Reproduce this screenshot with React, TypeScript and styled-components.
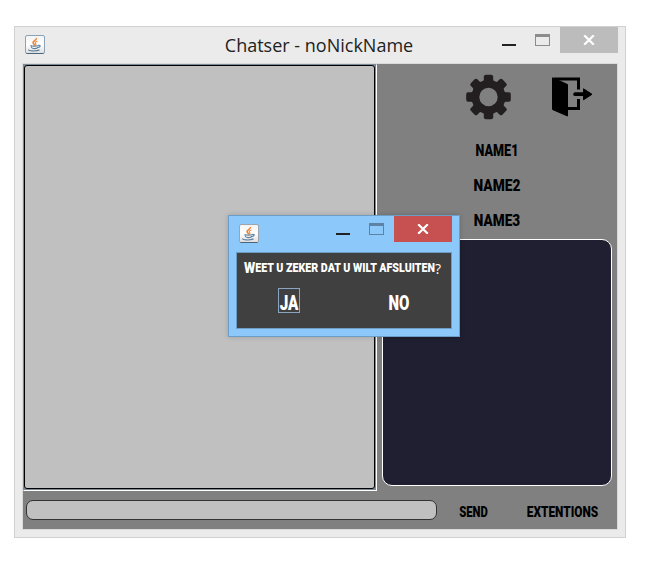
import React from "react";
import styled, { createGlobalStyle, css } from "styled-components";

const GlobalStyle = createGlobalStyle`
  * { box-sizing: border-box; }
  body { margin: 0; background: #fff; }
`;

const Desktop = styled.main`
  position: relative;
  width: 652px;
  height: 564px;
  padding: 26px 0 0 14px;
  overflow: hidden;
`;

const AppWindow = styled.section`
  display: flex;
  flex-direction: column;
  width: 612px;
  height: 512px;
  padding: 0 7px 7px;
  background: #ebebeb;
  border: 1px solid #d0d0d0;
`;

const TitleBar = styled.header`
  display: flex;
  align-items: flex-start;
  height: 36px;
  flex: none;
`;

const TitleIcon = styled.div<{ $top: number; $left: number }>`
  display: flex;
  margin: ${(p) => p.$top}px 0 0 ${(p) => p.$left}px;
`;

const Title = styled.h1`
  flex: 1;
  margin: 3px 0 0 91px;
  text-align: center;
  font: 400 18px/30px "Open Sans", sans-serif;
  color: #222;
  white-space: nowrap;
`;

const WindowControls = styled.div`
  display: flex;
  align-items: flex-start;
  margin-left: auto;
`;

const MinimizeButton = styled.button`
  width: 14px;
  height: 2px;
  margin: 17px 19px 0 0;
  padding: 0;
  border: 0;
  background: #222;
`;

const MaximizeButton = styled.button<{ $color: string }>`
  width: 15px;
  height: 12px;
  margin: 7px 10px 0 0;
  padding: 0;
  background: transparent;
  border: 1px solid ${(p) => p.$color};
  border-top-width: 3px;
`;

const CloseButton = styled.button<{ $color: string }>`
  display: flex;
  justify-content: center;
  width: 58px;
  height: 26px;
  padding: 8px 1px 0 0;
  border: 0;
  background: ${(p) => p.$color};
`;

const Content = styled.div`
  display: grid;
  grid-template: 427px 38px / 354px 240px;
  width: 596px;
  height: 467px;
  border: 1px solid #dadada;
  background: #808080;
`;

const ChatLog = styled.div`
  width: 354px;
  height: 427px;
  border: 1px solid #fff;
  border-left-color: #7b8a99;
  border-top-color: #7b8a99;
  background: #7a8a99;
  padding: 0 1px 1px 0;
`;

const ChatSurface = styled.div`
  width: 351px;
  height: 424px;
  border: 1px solid #000;
  border-radius: 3px;
  background: #c0c0c0;
`;

const Sidebar = styled.aside`
  display: flex;
  flex-direction: column;
  padding-left: 5px;
`;

const ToolRow = styled.div`
  display: flex;
  gap: 40px;
  height: 69px;
  padding: 10px 0 0 84px;
`;

const NameList = styled.div`
  display: flex;
  flex-direction: column;
  height: 106px;
  padding-left: 66px;
`;

const grunge = css`
  font-family: Roboto, "Liberation Sans", sans-serif;
  font-weight: 900;
  white-space: nowrap;
`;

const Caption = styled.span<{
  $width: number;
  $size: number;
  $line: number;
  $scale: number;
  $color?: string;
}>`
  ${grunge}
  display: flex;
  justify-content: center;
  width: ${(p) => p.$width}px;
  font-size: ${(p) => p.$size}px;
  line-height: ${(p) => p.$line}px;
  color: ${(p) => p.$color ?? "#000"};
  transform: scaleX(${(p) => p.$scale});
`;

const Small = styled.span<{ $size: number }>`
  font-size: ${(p) => p.$size}px;
`;

const QuestionMark = styled.span`
  width: 8px;
  font: 400 14px/21px "Open Sans", sans-serif;
  color: #fff;
`;

const InfoPanel = styled.div`
  width: 230px;
  height: 247px;
  border: 1px solid #fff;
  border-radius: 10px;
  background: #1f1f31;
`;

const Footer = styled.footer`
  grid-column: 1 / 3;
  display: flex;
  align-items: flex-start;
  padding: 9px 0 0 3px;
`;

const MessageInput = styled.div`
  width: 411px;
  height: 20px;
  border: 1px solid #333;
  border-radius: 7px;
  background: #c0c0c0;
`;

const FooterActions = styled.div`
  display: flex;
  gap: 39px;
  padding: 1px 0 0 22px;
`;

const Dialog = styled.section`
  position: absolute;
  left: 228px;
  top: 215px;
  width: 232px;
  height: 122px;
  padding: 0 7px 7px;
  border: 1px solid #6d9cc4;
  background: #8dc8fb;
  box-shadow: 0 0 5px rgba(0, 0, 0, 0.18);
`;

const DialogBar = styled.header`
  display: flex;
  align-items: flex-start;
  height: 36px;
`;

const DialogBody = styled.div`
  width: 216px;
  height: 77px;
  padding-top: 5px;
  border: 1px solid #6d9cc4;
  background: #404040;
`;

const Question = styled.p`
  display: flex;
  margin: 0;
  height: 20px;
  padding-left: 7px;
`;

const Choices = styled.div`
  display: flex;
  padding: 10px 0 0 41px;
  gap: 88px;
`;

const Choice = styled.div<{ $focused?: boolean }>`
  display: flex;
  justify-content: center;
  width: 22px;
  height: 25px;
  padding-top: 4px;
  border: 1px solid ${(p) => (p.$focused ? "#8aa5c2" : "transparent")};
`;

const JavaIcon = ({ edge }: { edge: string }) => (
  <svg width="20" height="19" viewBox="0 0 20 19">
    <defs>
      <linearGradient id="javaTile" x1="0" y1="0" x2="0" y2="1">
        <stop offset="0" stopColor="#f3f3f3" />
        <stop offset="0.5" stopColor="#fff" />
        <stop offset="1" stopColor="#dedede" />
      </linearGradient>
    </defs>
    <rect x=".5" y=".5" width="19" height="18" rx="1.5" fill="url(#javaTile)" stroke={edge} />
    <path d="M1.5 18.5h17" stroke="#4c6478" />
    <path d="M11.5 3c.5 2-3.500 2.500-3.500 4.500 0 1.200 1.400 1.500 1.500 3" fill="none" stroke="#ee8130" strokeWidth="1.500" />
    <path d="M12.500 6c-3 1-2.500 2-1.500 3-.2.600-.5 1-1 1.300" fill="none" stroke="#f08b3a" strokeWidth="1.100" />
    <path d="M5.500 10.500c1.500.9 6 .9 8 0M6 11.500c.3 1.500 1 2 3 2.200 2 .1 3.500-.2 4-1.700M13.500 10.300c2.500-.5 2 2-.5 2.200M4 14.500c-1.500 1.500 7 2.200 10.500.4" fill="none" stroke="#5d7f9d" strokeWidth="1.200" />
  </svg>
);

const CloseGlyph = () => (
  <svg width="12" height="10" viewBox="0 0 12 10">
    <path d="M1.200.3 10.800 9.700M10.800.3 1.200 9.700" stroke="#fff" strokeWidth="2.200" />
  </svg>
);

const GearIcon = () => (
  <svg width="45" height="46" viewBox="-22.500 -23 45 46">
    <g fill="#231f20">
      {[0, 45, 90, 135, 180, 225, 270, 315].map((angle) => (
        <path
          key={angle}
          transform={`rotate(${angle})`}
          d="M-6.500-14 -4.700-17v-3.500Q-4.500-22.300-2.700-22.300H2.700Q4.500-22.300 4.700-20.500V-17L6.500-14Z"
        />
      ))}
      <path
        fillRule="evenodd"
        d="M-17 0a17 17 0 1 0 34 0a17 17 0 1 0-34 0ZM-9.200 0a9.200 9.200 0 1 1 18.400 0a9.200 9.200 0 1 1-18.400 0Z"
      />
    </g>
  </svg>
);

const ExitIcon = () => (
  <svg width="44" height="45" viewBox="0 0 44 45">
    <path d="M3 5H27.500V15.500M27.500 25V34.500H16" fill="none" stroke="#000" strokeWidth="3" />
    <path d="M1.500 3.800 16.500 10.500V42L1.500 35.500Z" fill="#000" stroke="#000" strokeLinejoin="round" />
    <path d="M24.200 20.200H34" stroke="#000" strokeWidth="3.800" strokeLinecap="round" />
    <path d="M32.500 14.800 41 20.300 32.500 25.800Z" fill="#000" stroke="#000" strokeLinejoin="round" />
  </svg>
);

const names = [
  { label: "1", scale: 0.74 },
  { label: "2", scale: 0.81 },
  { label: "3", scale: 0.8 },
];

export default function App() {
  return (
    <>
      <GlobalStyle />
      <Desktop>
        <AppWindow>
          <TitleBar>
            <TitleIcon $top={8} $left={3}>
              <JavaIcon edge="#8ba3b6" />
            </TitleIcon>
            <Title>Chatser - noNickName</Title>
            <WindowControls>
              <MinimizeButton aria-label="Minimize" />
              <MaximizeButton aria-label="Maximize" $color="#8c8c8c" />
              <CloseButton aria-label="Close" $color="#bcbcbc">
                <CloseGlyph />
              </CloseButton>
            </WindowControls>
          </TitleBar>
          <Content>
            <ChatLog>
              <ChatSurface />
            </ChatLog>
            <Sidebar>
              <ToolRow>
                <GearIcon />
                <ExitIcon />
              </ToolRow>
              <NameList>
                {names.map((n) => (
                  <Caption key={n.label} $width={98} $size={17} $line={35} $scale={n.scale}>
                    NAME{n.label}
                  </Caption>
                ))}
              </NameList>
              <InfoPanel />
            </Sidebar>
            <Footer>
              <MessageInput />
              <FooterActions>
                <Caption $width={29} $size={15.500} $line={22} $scale={0.73}>
                  SEND
                </Caption>
                <Caption $width={71} $size={15.500} $line={22} $scale={0.765}>
                  EXTENTIONS
                </Caption>
              </FooterActions>
            </Footer>
          </Content>
        </AppWindow>
        <Dialog>
          <DialogBar>
            <TitleIcon $top={8} $left={3}>
              <JavaIcon edge="#9aa5ae" />
            </TitleIcon>
            <WindowControls>
              <MinimizeButton aria-label="Minimize" />
              <MaximizeButton aria-label="Maximize" $color="#5d82a3" />
              <CloseButton aria-label="Close" $color="#c75050">
                <CloseGlyph />
              </CloseButton>
            </WindowControls>
          </DialogBar>
          <DialogBody>
            <Question>
              <Caption $width={191} $size={12.800} $line={20} $scale={0.832} $color="#fff">
                <Small $size={15.500}>W</Small>
                <span>EET U ZEKER DAT U WILT AFSLUITEN</span>
              </Caption>
              <QuestionMark>?</QuestionMark>
            </Question>
            <Choices>
              <Choice $focused>
                <Caption $width={20} $size={20} $line={20} $scale={0.76} $color="#fff">
                  JA
                </Caption>
              </Choice>
              <Choice>
                <Caption $width={20} $size={20} $line={20} $scale={0.75} $color="#fff">
                  NO
                </Caption>
              </Choice>
            </Choices>
          </DialogBody>
        </Dialog>
      </Desktop>
    </>
  );
}
